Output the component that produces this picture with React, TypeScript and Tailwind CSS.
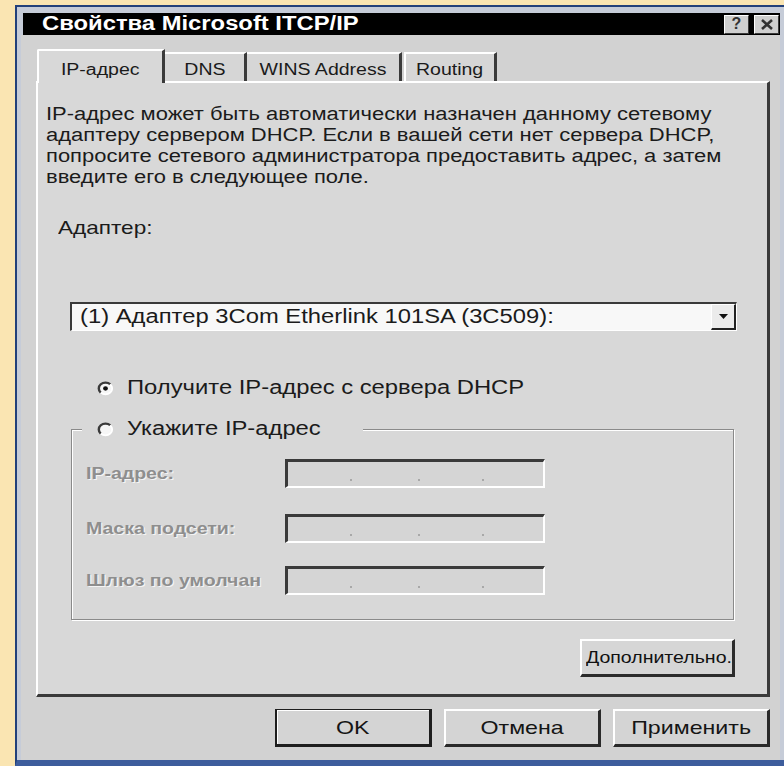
import React from "react";

const font = "font-['Liberation_Sans',Arial,Helvetica,sans-serif]";

type WideProps = { children: React.ReactNode; className?: string; center?: boolean };

// The dialog's lettering is drawn wide, so each run of text is stretched horizontally.
function Wide({ children, className = "", center = false }: WideProps) {
  const origin = center ? "origin-center" : "origin-left";
  return (
    <span className={`inline-block whitespace-nowrap scale-x-[1.22] ${origin} ${className}`}>
      {children}
    </span>
  );
}

function Radio({ checked = false }: { checked?: boolean }) {
  return (
    <svg width="17" height="15" viewBox="0 0 14 14" preserveAspectRatio="none" className="shrink-0">
      <circle cx="7" cy="7" r="5.5" fill="#f6f6f6" />
      <path d="M3.1 10.9 A5.5 5.5 0 0 1 10.9 3.1" fill="none" stroke="#3a3a3a" strokeWidth="2" />
      <path d="M10.9 3.1 A5.5 5.5 0 0 1 3.1 10.9" fill="none" stroke="#ffffff" strokeWidth="1.5" />
      {checked && <circle cx="7" cy="7" r="2" fill="#111111" />}
    </svg>
  );
}

function IpField() {
  return (
    <div className="w-[260px] h-[29px] bg-[#d5d5d5] border-t-[3px] border-l-[3px] border-b-2 border-r-2 border-t-[#3a3a3a] border-l-[#3a3a3a] border-b-white border-r-white flex items-end pb-[5px]">
      <span className="ml-[62px] w-[2px] h-[2px] bg-[#a8a8a8]" />
      <span className="ml-[66px] w-[2px] h-[2px] bg-[#a8a8a8]" />
      <span className="ml-[62px] w-[2px] h-[2px] bg-[#a8a8a8]" />
    </div>
  );
}

function FieldRow({ label, className = "" }: { label: string; className?: string }) {
  return (
    <div className={`flex items-center h-[29px] pl-[14px] ${className}`}>
      <div className="w-[175px]">
        <Wide className="font-bold text-[16px] leading-none text-[#8e8e8e] [text-shadow:1px_1px_0_#f4f4f4]">
          {label}
        </Wide>
      </div>
      <div className="ml-[24px]">
        <IpField />
      </div>
    </div>
  );
}

function DialogButton({ label, isDefault = false }: { label: string; isDefault?: boolean }) {
  return (
    <button
      className={
        isDefault
          ? "w-[157px] h-[38px] bg-[#d4d4d4] border-l-2 border-t border-r-[3px] border-b-[3px] border-[#1e1e1e] shadow-[inset_1px_1px_0_#ffffff] flex items-center justify-center text-[#151515]"
          : "w-[157px] h-[38px] bg-[#d4d4d4] border-t-2 border-l-2 border-r-[3px] border-b-[3px] border-t-white border-l-white border-r-[#2a2a2a] border-b-[#2a2a2a] flex items-center justify-center text-[#151515]"
      }
    >
      <Wide center className="text-[19px] leading-none">
        {label}
      </Wide>
    </button>
  );
}

export default function App() {
  return (
    <div className={`w-[784px] h-[766px] overflow-hidden bg-[#fae5b2] pl-[15px] pt-[5px] flex ${font}`}>
      <div className="flex-1 flex flex-col border-l-2 border-t-2 border-b-[6px] border-l-[#22407a] border-t-[#22407a] border-b-[#3d5d9c] bg-[#c6ccd8] pl-[4px] pr-[4px] pt-[6px]">
        {/* caption bar */}
        <div className="h-[22px] ml-[2px] bg-black flex items-center">
          <Wide className="ml-[19px] text-white font-bold text-[19.5px] leading-none">
            Свойства Microsoft ITCP/IP
          </Wide>
          <div className="ml-auto mr-[1px] flex gap-[5px]">
            <div className="w-[25px] h-[19px] bg-[#cfcfcf] border-t border-l border-t-white border-l-white border-r border-b border-r-[#3a3a3a] border-b-[#3a3a3a] flex items-center justify-center text-[16px] font-bold leading-none text-[#333]">
              ?
            </div>
            <div className="w-[25px] h-[19px] bg-[#cfcfcf] border-t border-l border-t-white border-l-white border-r border-b border-r-[#3a3a3a] border-b-[#3a3a3a] flex items-center justify-center">
              <svg width="14" height="11" viewBox="0 0 14 11">
                <path d="M2 1 L12 10 M12 1 L2 10" stroke="#333" strokeWidth="2.6" />
              </svg>
            </div>
          </div>
        </div>

        {/* dialog face */}
        <div className="flex-1 bg-[#d2d2d2] pl-[15px] pr-[10px] pt-[14px] flex flex-col text-[#1b1b1b]">
          {/* tabs */}
          <div className="flex items-start h-[32px] pl-[1px]">
            <div className="relative z-10 w-[128px] h-[34px] bg-[#d8d8d8] border-t-2 border-l-2 border-r-[3px] border-t-white border-l-white border-r-[#3a3a3a] rounded-tl-[2px] flex justify-center pt-[11px]">
              <Wide center className="text-[16px] leading-none">IP-адрес</Wide>
            </div>
            <div className="mt-[3px] w-[82px] h-[29px] bg-[#d6d6d6] border-t-2 border-r-[3px] border-t-white border-r-[#3a3a3a] flex justify-center pt-[8px]">
              <Wide center className="text-[16px] leading-none">DNS</Wide>
            </div>
            <div className="mt-[3px] w-[155px] h-[29px] bg-[#d6d6d6] border-t-2 border-r-[3px] border-t-white border-r-[#3a3a3a] flex justify-center pt-[8px]">
              <Wide center className="text-[16px] leading-none">WINS Address</Wide>
            </div>
            <div className="mt-[3px] ml-[2px] w-[93px] h-[29px] bg-[#d6d6d6] border-t-2 border-l-2 border-r-[3px] border-t-white border-l-white border-r-[#3a3a3a] flex justify-center pt-[8px]">
              <Wide center className="text-[16px] leading-none">Routing</Wide>
            </div>
          </div>

          {/* tab page */}
          <div className="h-[616px] bg-[#d8d8d8] border-t-2 border-l-2 border-r-[3px] border-b-[3px] border-t-white border-l-white border-r-[#3a3a3a] border-b-[#3a3a3a] pl-[8px] pt-[21px] flex flex-col">
            <div className="origin-left scale-x-[1.22] text-[18px] leading-[21px] whitespace-nowrap">
              <div>IP-адрес может быть автоматически назначен данному сетевому</div>
              <div>адаптеру сервером DHCP. Если в вашей сети нет сервера DHCP,</div>
              <div>попросите сетевого администратора предоставить адрес, а затем</div>
              <div>введите его в следующее поле.</div>
            </div>

            <div className="mt-[29px] ml-[12px] leading-[21px]">
              <Wide className="text-[18.5px]">Адаптер:</Wide>
            </div>

            {/* adapter drop-down */}
            <div className="mt-[63px] ml-[24px] w-[667px] h-[29px] flex items-center bg-[#f8f8f8] border-t-2 border-l-2 border-b border-r border-t-[#3a3a3a] border-l-[#3a3a3a] border-b-white border-r-white">
              <Wide className="ml-[8px] text-[19.5px] leading-none">(1) Адаптер 3Com Etherlink 101SA (3C509):</Wide>
              <div className="ml-auto w-[25px] h-full bg-[#ebebeb] border-t border-l border-t-white border-l-white border-r-2 border-b-2 border-r-[#222] border-b-[#222] flex items-center justify-center">
                <svg width="9" height="5" viewBox="0 0 9 5">
                  <path d="M0 0 H9 L4.5 5 Z" fill="#111" />
                </svg>
              </div>
            </div>

            {/* DHCP option */}
            <div className="mt-[45px] ml-[51px] h-[24px] flex items-center">
              <Radio checked />
              <Wide className="ml-[13px] text-[19.5px] leading-none">Получите IP-адрес с сервера DHCP</Wide>
            </div>

            {/* manual address group */}
            <div className="mt-[29px] ml-[25px] w-[663px] h-[191px] border border-[#8a8a8a] shadow-[inset_1px_1px_0_#ffffff,1px_1px_0_#ffffff] flex flex-col">
              <div className="-mt-[13px] ml-[10px] w-[281px] h-[24px] bg-[#d8d8d8] flex items-center pl-[15px]">
                <Radio />
                <Wide className="ml-[13px] text-[19.5px] leading-none">Укажите IP-адрес</Wide>
              </div>
              <FieldRow label="IP-адрес:" className="mt-[18px]" />
              <FieldRow label="Маска подсети:" className="mt-[26px]" />
              <FieldRow label="Шлюз по умолчан" className="mt-[23px]" />
            </div>

            <div className="mt-[19px] self-end mr-[32px] w-[155px] h-[38px] bg-[#d6d6d6] border-t-2 border-l-2 border-t-white border-l-white border-r-[3px] border-b-[3px] border-r-[#2b2b2b] border-b-[#2b2b2b] flex items-center pl-[4px]">
              <Wide className="text-[16px] leading-none text-[#111]">Дополнительно.</Wide>
            </div>
          </div>

          {/* dialog buttons */}
          <div className="mt-[12px] flex justify-end gap-[12px]">
            <DialogButton label="OK" isDefault />
            <DialogButton label="Отмена" />
            <DialogButton label="Применить" />
          </div>
        </div>
      </div>
    </div>
  );
}
